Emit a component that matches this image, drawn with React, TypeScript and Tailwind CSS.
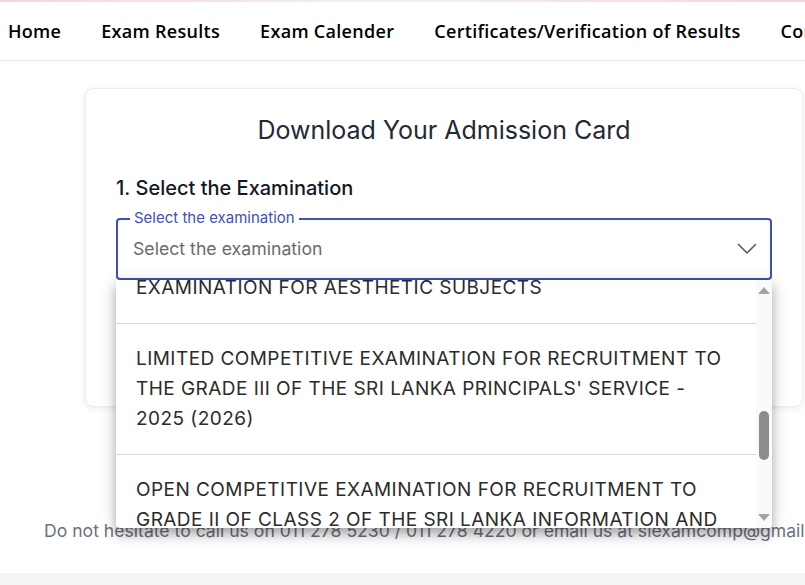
import React from "react";

const navItems = [
  "Home",
  "Exam Results",
  "Exam Calender",
  "Certificates/Verification of Results",
  "Contact Us",
];

const options = [
  "G.C.E. (A/L) PRACTICAL TEST 2025 (2026) -\nEXAMINATION FOR AESTHETIC SUBJECTS",
  "LIMITED COMPETITIVE EXAMINATION FOR RECRUITMENT TO THE GRADE III OF THE SRI LANKA PRINCIPALS' SERVICE - 2025 (2026)",
  "OPEN COMPETITIVE EXAMINATION FOR RECRUITMENT TO GRADE II OF CLASS 2 OF THE SRI LANKA INFORMATION AND COMMUNICATION TECHNOLOGY SERVICE - 2025 (2026)",
];

const App = () => {
  return (
    <div className="relative h-[585px] w-[805px] overflow-hidden bg-white">
      <div className="h-[2px] w-full bg-gradient-to-r from-[#f6d5e3] via-[#f3eef9] to-[#f6d3e0]" />
      <nav className="flex h-[59px] items-center gap-10 whitespace-nowrap border-b border-[#e7e7e7] pl-2 font-['Open_Sans',sans-serif] text-[18px] font-semibold tracking-[0.3px] text-black">
        {navItems.map((item) => (
          <span key={item}>{item}</span>
        ))}
      </nav>

      <div className="ml-[85px] mt-[27px] h-[319px] w-[718px] rounded-lg border border-[#ececec] bg-white px-[30px] pt-[25px] font-['Inter',sans-serif] shadow-[0_2px_6px_rgba(0,0,0,0.08)]">
        <h1 className="text-center text-[25px] leading-8 text-[#1f2937]">
          Download Your Admission Card
        </h1>
        <h2 className="mt-[28px] text-[20px] font-medium leading-7 text-[#111827]">
          1. Select the Examination
        </h2>

        <div className="relative mt-[16px]">
          <div className="flex h-[62px] items-center justify-between rounded-[4px] border-2 border-[#3f51b5] pl-[15px] pr-[13px]">
            <span className="text-[17.7px] text-[#6b6b6b]">Select the examination</span>
            <svg width="20" height="12" viewBox="0 0 20 12" fill="none">
              <path d="M1.5 1.5 L10 10 L18.5 1.5" stroke="#5f5f5f" strokeWidth="1.7" strokeLinecap="round" strokeLinejoin="round" />
            </svg>
          </div>
          <span className="absolute -top-[9px] left-[14px] bg-white px-[4px] text-[15px] leading-[18px] text-[#3f51b5]">
            Select the examination
          </span>

          <div className="absolute left-0 top-[62px] z-10 flex h-[248px] w-full overflow-hidden rounded-b-[4px] bg-white shadow-[0_5px_10px_-3px_rgba(0,0,0,0.2),0_8px_12px_1px_rgba(0,0,0,0.14),0_3px_16px_2px_rgba(0,0,0,0.12)]">
            <div className="flex-1 overflow-hidden text-[19px] uppercase leading-[30px] tracking-[0.45px] text-[#2b2b2b]">
              <div className="-mt-[57px]">
                {options.map((opt, i) => (
                  <div
                    key={i}
                    className={`whitespace-pre-line px-5 py-5 ${i > 0 ? "border-t border-[#d9d9d9]" : ""}`}
                  >
                    {opt}
                  </div>
                ))}
              </div>
            </div>
            <div className="relative flex w-[16px] flex-col items-center justify-between bg-[#fafafa] py-[7px]">
              <div className="h-0 w-0 border-x-[6px] border-b-[7px] border-x-transparent border-b-[#a3a3a3]" />
              <div className="absolute left-[3px] top-[131px] h-[49px] w-[10px] rounded-full bg-[#8c8c8c]" />
              <div className="h-0 w-0 border-x-[6px] border-t-[7px] border-x-transparent border-t-[#a3a3a3]" />
            </div>
          </div>
        </div>
      </div>

      <p className="mt-[111px] whitespace-nowrap pl-[44px] font-['Inter',sans-serif] text-[17.6px] text-[#6b7280]">
        Do not hesitate to call us on 011 278 5230 / 011 278 4220 or email us at slexamcomp@gmail.com
      </p>

      <div className="absolute bottom-0 left-0 h-[12px] w-full bg-[#f5f5f5]" />
    </div>
  );
};

export default App;
